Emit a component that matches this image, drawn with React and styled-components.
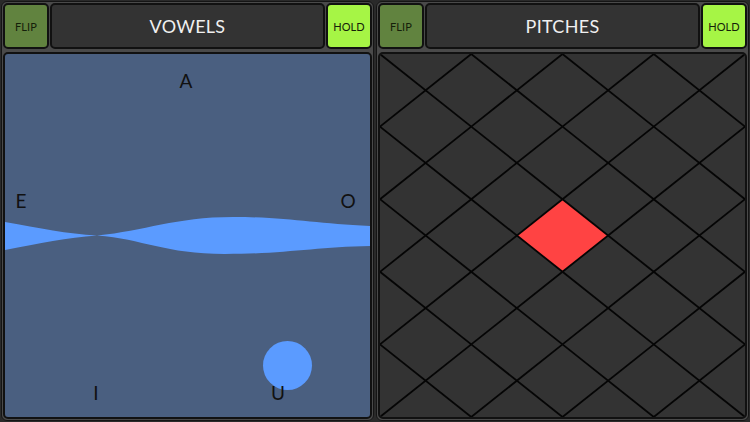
import React from "react";
import styled, { createGlobalStyle } from "styled-components";

const Global = createGlobalStyle`
  html, body { margin: 0; padding: 0; background: #2a2a2a; }
  body { width: 750px; height: 422px; overflow: hidden; font-family: Lato, "Noto Sans", sans-serif; }
`;

const Screen = styled.div`
  width: 750px;
  height: 422px;
  box-sizing: border-box;
  padding: 1px;
  display: grid;
  grid-template-columns: 1fr 1fr;
  gap: 2px;
  background: #2a2a2a;
`;

const Column = styled.section`
  box-sizing: border-box;
  border: 1px solid #151515;
  border-radius: 6px;
  background: #4a4a4a;
  padding: 1px;
  display: flex;
  flex-direction: column;
  gap: 3px;
  min-width: 0;
`;

const Header = styled.div`
  height: 46px;
  display: flex;
  gap: 1px;
`;

const Tile = styled.div`
  box-sizing: border-box;
  border: 2px solid #111;
  border-radius: 5px;
  display: flex;
  align-items: center;
  justify-content: center;
`;

const SideButton = styled(Tile)`
  width: 46px;
  flex: none;
  background: ${(p) => (p.$on ? "#a6f545" : "#61833f")};
  color: #15200a;
  font-size: 11px;
  letter-spacing: 0.1px;
`;

const Title = styled(Tile)`
  flex: 1;
  background: #333333;
  color: #f0f0f0;
  font-size: 18px;
  letter-spacing: 0.3px;
`;

const Panel = styled(Tile)`
  flex: 1;
  position: relative;
  overflow: hidden;
  display: block;
  background: ${(p) => p.$bg};
`;

const Canvas = styled.svg`
  position: absolute;
  left: 0;
  top: 0;
  width: 100%;
  height: 100%;
  display: block;
`;

const Letter = styled.span`
  position: absolute;
  transform: translate(-50%, -50%);
  color: #111;
  font-size: 19px;
  line-height: 1;
`;

const letters = [
  { t: "A", x: 181, y: 26 },
  { t: "E", x: 16, y: 146 },
  { t: "O", x: 343, y: 146 },
  { t: "I", x: 91, y: 338 },
  { t: "U", x: 273, y: 338 },
];

function Vowels() {
  return (
    <Panel $bg="#4a5f80">
      <Canvas viewBox="0 0 365 363" preserveAspectRatio="none">
        <path
          fill="#5b9bff"
          d="M0,168 C35,174 62,180 92,181.5 C140,177 170,163 228,163 C285,163 310,170 366,172 L366,192 C310,193 280,200 220,200 C160,200 138,185 92,181.5 C62,184 35,189 0,196 Z"
        />
        <circle cx="282.5" cy="311.5" r="24.5" fill="#5b9bff" />
      </Canvas>
      {letters.map((l) => (
        <Letter key={l.t} style={{ left: l.x, top: l.y }}>
          {l.t}
        </Letter>
      ))}
    </Panel>
  );
}

function Pitches() {
  const W = 365;
  const H = 363;
  const cols = 4;
  const rows = 5;
  const cw = W / cols;
  const ch = H / rows;
  const lines = [];
  for (let i = 0; i < cols; i++) {
    for (let j = 0; j < rows; j++) {
      const x0 = i * cw;
      const y0 = j * ch;
      lines.push(
        <line key={`a${i}-${j}`} x1={x0} y1={y0} x2={x0 + cw} y2={y0 + ch} />,
        <line key={`b${i}-${j}`} x1={x0 + cw} y1={y0} x2={x0} y2={y0 + ch} />
      );
    }
  }
  const cx = 2 * cw;
  const red = `${cx},${2 * ch} ${cx + cw / 2},${2.5 * ch} ${cx},${3 * ch} ${cx - cw / 2},${2.5 * ch}`;
  return (
    <Panel $bg="#333333">
      <Canvas viewBox={`0 0 ${W} ${H}`} preserveAspectRatio="none">
        <polygon points={red} fill="#ff4343" />
        <g stroke="#050505" strokeWidth="1.8">{lines}</g>
      </Canvas>
    </Panel>
  );
}

export default function App() {
  return (
    <>
      <Global />
      <Screen>
        <Column>
          <Header>
            <SideButton>FLIP</SideButton>
            <Title>VOWELS</Title>
            <SideButton $on>HOLD</SideButton>
          </Header>
          <Vowels />
        </Column>
        <Column>
          <Header>
            <SideButton>FLIP</SideButton>
            <Title>PITCHES</Title>
            <SideButton $on>HOLD</SideButton>
          </Header>
          <Pitches />
        </Column>
      </Screen>
    </>
  );
}
